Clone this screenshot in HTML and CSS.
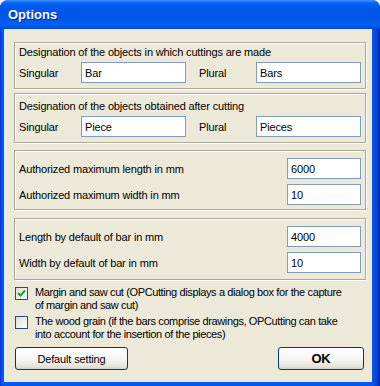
FILE: index.html
```html
<!DOCTYPE html>
<html>
<head>
  <title>Options</title>
  <link rel="stylesheet" href="styles.css">
</head>
<body>
  <div class="window">
    <div class="titlebar">Options</div>

    <div class="client">
      <!-- names of the bars -->
      <div class="group group-bars">
        <div class="caption">Designation of the objects in which cuttings are made</div>
        <div class="pair-row">
          <label>Singular</label>
          <input class="field" type="text" value="Bar">
          <span></span>
          <label>Plural</label>
          <input class="field" type="text" value="Bars">
        </div>
      </div>

      <!-- names of the pieces -->
      <div class="group group-pieces">
        <div class="caption">Designation of the objects obtained after cutting</div>
        <div class="pair-row">
          <label>Singular</label>
          <input class="field" type="text" value="Piece">
          <span></span>
          <label>Plural</label>
          <input class="field" type="text" value="Pieces">
        </div>
      </div>

      <div class="group group-values">
        <div class="value-row">
          <label>Authorized maximum length in mm</label>
          <input class="field field-num" type="text" value="6000">
        </div>
        <div class="value-row">
          <label>Authorized maximum width in mm</label>
          <input class="field field-num" type="text" value="10">
        </div>
      </div>

      <div class="group group-values group-last">
        <div class="value-row">
          <label>Length by default of bar in mm</label>
          <input class="field field-num" type="text" value="4000">
        </div>
        <div class="value-row">
          <label>Width by default of bar in mm</label>
          <input class="field field-num" type="text" value="10">
        </div>
      </div>

      <div class="check-row">
        <span class="checkbox">
          <svg width="11" height="11" viewBox="0 0 11 11">
            <path d="M2 5 L4.5 7.5 L9 2.5" fill="none" stroke="#21a121" stroke-width="2"/>
          </svg>
        </span>
        <span class="check-text">Margin and saw cut (OPCutting displays a dialog box for the capture<br>of margin and saw cut)</span>
      </div>
      <div class="check-row">
        <span class="checkbox"></span>
        <span class="check-text">The wood grain (if the bars comprise drawings, OPCutting can take<br>into account for the insertion of the pieces)</span>
      </div>

      <div class="buttons">
        <button class="btn btn-default">Default setting</button>
        <button class="btn btn-ok">OK</button>
      </div>
    </div>
  </div>
</body>
</html>
```

FILE: styles.css
```css
/* page */
body {
  margin: 0;
  font-family: "Liberation Sans", Arial, sans-serif;
  font-size: 11px;
  letter-spacing: -0.15px;
  color: #000;
  background: #fff;
}

.window {
  width: 380px;
  height: 386px;
  display: flex;
  flex-direction: column;
  background: linear-gradient(to right, #0831d9, #0058ee 2px, #0058ee 373px, #0a3ac8 378px, #001ea0);
  border-radius: 8px 8px 0 0;
  overflow: hidden;
}

/* title bar */
.titlebar {
  height: 29px;
  flex: none;
  padding-left: 8px;
  line-height: 30px;
  font-size: 13px;
  font-weight: bold;
  letter-spacing: 0;
  color: #fff;
  text-shadow: 1px 1px 0 #0f1d8a;
  background: linear-gradient(to bottom, #3d95ff 0%, #0a64f0 10%, #0058ee 22%, #0055e5 60%, #0060f8 85%, #0049d4 100%);
}

.client {
  flex: 1;
  margin: 0 8px 4px 4px;
  padding: 13px 6px 0 10px;
  background: #ece9d8;
}

/* group boxes */
.group {
  border: 1px solid #aca899;
  box-shadow: 1px 1px 0 #fff, inset 1px 1px 0 #fff;
  padding: 3px 4px 5px 4px;
  margin-bottom: 4px;
}

.group-pieces {
  padding-top: 6px;
  margin-bottom: 7px;
}

.group-values {
  padding-top: 7px;
  padding-bottom: 4px;
  margin-bottom: 8px;
}

.group-last {
  padding-bottom: 6px;
  margin-bottom: 6px;
}

.caption {
  line-height: 13px;
  margin-bottom: 3px;
}

.pair-row {
  display: grid;
  grid-template-columns: 62px 105px 13px 57px 105px;
  align-items: center;
}

.value-row {
  display: flex;
  align-items: center;
  justify-content: space-between;
}

.value-row + .value-row {
  margin-top: 5px;
}

.field {
  box-sizing: border-box;
  height: 21px;
  margin: 0;
  padding: 0 3px;
  border: 1px solid #7f9db9;
  background: #fff;
  font-family: "Liberation Sans", Arial, sans-serif;
  font-size: 11px;
  letter-spacing: -0.15px;
  color: #000;
  outline: none;
}

.field-num {
  width: 74px;
}

/* check boxes */
.check-row {
  display: flex;
  align-items: flex-start;
  margin-left: 1px;
  margin-bottom: 3px;
}

.checkbox {
  box-sizing: border-box;
  width: 13px;
  height: 13px;
  flex: none;
  margin-top: 1px;
  margin-right: 7px;
  border: 1px solid #1c5180;
  background: linear-gradient(135deg, #dcdcd7, #fff);
  display: flex;
  align-items: center;
  justify-content: center;
}

.check-text {
  line-height: 13px;
  letter-spacing: -0.38px;
  white-space: nowrap;
}

/* buttons */
.buttons {
  display: flex;
  justify-content: space-between;
  margin-top: 6px;
  padding: 0 2px 0 1px;
}

.btn {
  height: 23px;
  border: 1px solid #003c74;
  border-radius: 3px;
  background: linear-gradient(to bottom, #fff, #f4f4f0 60%, #e3e1d8 90%, #d6d0c5);
  font-family: "Liberation Sans", Arial, sans-serif;
  font-size: 11px;
  letter-spacing: -0.15px;
  color: #000;
  padding: 0;
}

.btn-default {
  width: 113px;
}

.btn-ok {
  width: 86px;
  font-size: 13px;
  font-weight: bold;
}
```
